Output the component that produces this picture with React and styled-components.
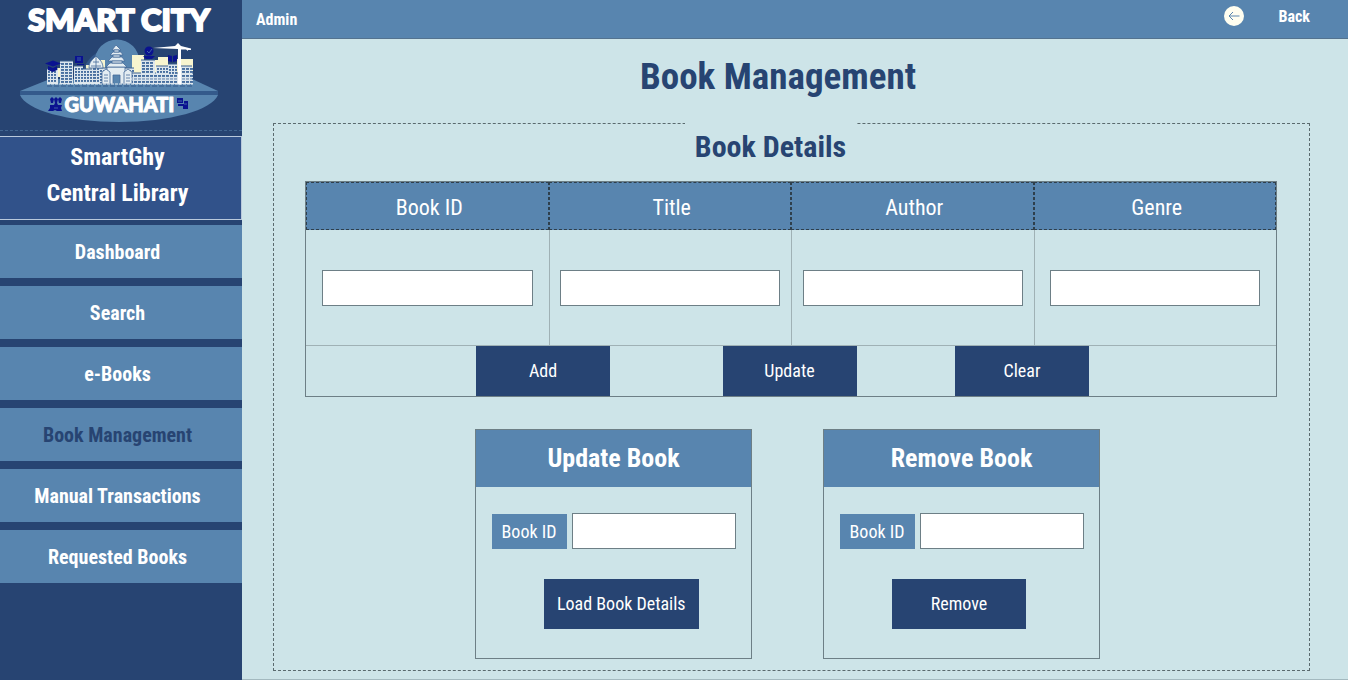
import React from "react";
import styled, { createGlobalStyle } from "styled-components";

const color = {
  navy: "#274472",
  brand: "#31528a",
  steel: "#5885af",
  ice: "#cde4e8",
  line: "#6d7f86",
  cream: "#f8f5cf",
  mark: "#0a1290",
};

const GlobalStyle = createGlobalStyle`
  * { box-sizing: border-box; }
  body {
    margin: 0;
    background: ${color.ice};
    font-family: "Agency FB", "Liberation Sans Narrow", "Roboto Condensed", "Liberation Sans", sans-serif;
  }
  button, input { font-family: inherit; }
`;

const Page = styled.div`
  display: flex;
  min-height: 100vh;
`;

const Sidebar = styled.aside`
  flex: 0 0 242px;
  background: ${color.navy};
`;

const LogoBox = styled.div`
  height: 131px;
  margin-bottom: 5px;
  border-bottom: 1px dashed ${color.steel}88;
`;

const LogoSvg = styled.svg`
  display: block;
  width: 100%;
`;

const Brand = styled.h2`
  margin: 0 0 5px;
  padding: 2px 6px 8px 0;
  border: 1px solid #b9c9dc;
  border-left: 0;
  background: ${color.brand};
  color: #fff;
  font-size: 24px;
  line-height: 36px;
  text-align: center;
`;

const Nav = styled.nav`
  display: flex;
  flex-direction: column;
  gap: 8px;
`;

const NavLink = styled.a`
  padding: 2px 7px 0 0;
  background: ${color.steel};
  color: ${(p) => (p.$active ? color.navy : "#fff")};
  font-size: 20px;
  font-weight: 700;
  line-height: 51px;
  text-align: center;
  text-decoration: none;
`;

const Main = styled.div`
  flex: 1;
  display: flex;
  flex-direction: column;
  min-width: 0;
`;

const TopBar = styled.header`
  display: flex;
  align-items: center;
  justify-content: space-between;
  height: 39px;
  padding: 0 38px 0 14px;
  border-bottom: 1px solid #54738f;
  background: ${color.steel};
  color: #fff;
  font-size: 16px;
  font-weight: 700;
`;

const BackLink = styled.a`
  display: flex;
  align-items: center;
  gap: 34px;
  padding-bottom: 6px;
  color: inherit;
  text-decoration: none;
`;

const Content = styled.main`
  flex: 1;
  display: flex;
  flex-direction: column;
  padding: 14px 38px 8px 31px;
  border-bottom: 1px solid #a3b9bf;
`;

const PageTitle = styled.h1`
  margin: 0 27px 22px 0;
  color: ${color.navy};
  font-size: 37px;
  line-height: 48px;
  text-align: center;
`;

const DetailsPanel = styled.section`
  flex: 1;
  padding: 0 32px 10px 31px;
  border: 1px dashed #5a6a6e;
`;

const PanelHeader = styled.div`
  display: flex;
  justify-content: center;
  margin: -1px 41px 10px 0;
`;

const PanelTitle = styled.h2`
  margin: 0;
  padding: 0 10px;
  background: ${color.ice};
  color: ${color.navy};
  font-size: 30px;
  line-height: 48px;
`;

const BookTable = styled.table`
  width: 100%;
  table-layout: fixed;
  border: 1px solid ${color.line};
  border-spacing: 0;
`;

const HeadCell = styled.th`
  height: 48px;
  padding: 4px 0 0 4px;
  border: 1px dashed #2e3f4c;
  background: ${color.steel};
  color: #fff;
  font-size: 22px;
  font-weight: 400;
  line-height: 30px;
`;

const FieldCell = styled.td`
  height: 116px;
  padding: 0;
  border-bottom: 1px solid #9fb1b5;
  text-align: center;
  & + & { border-left: 1px solid #9fb1b5; }
`;

const TextInput = styled.input`
  width: ${(p) => p.$width};
  height: 36px;
  padding: 0 8px;
  border: 1px solid ${color.line};
  background: #fff;
  font-size: 20px;
`;

const ActionCell = styled.td`
  padding: 0;
`;

const Actions = styled.div`
  display: grid;
  grid-template-columns: 171fr 134px 113fr 134px 99fr 134px 188fr;
  & > :nth-child(1) { grid-column: 2; }
  & > :nth-child(2) { grid-column: 4; }
  & > :nth-child(3) { grid-column: 6; }
`;

const Button = styled.button`
  min-width: 134px;
  height: 50px;
  padding: 0 13px 2px;
  border: 0;
  background: ${color.navy};
  color: #fff;
  font-size: 18px;
`;

const Cards = styled.div`
  display: flex;
  justify-content: center;
  gap: 71px;
  margin: 32px 7px 0 0;
`;

const Card = styled.form`
  width: 277px;
  height: 230px;
  border: 1px solid ${color.line};
`;

const CardTitle = styled.h3`
  margin: 0 0 26px;
  background: ${color.steel};
  color: #fff;
  font-size: 26px;
  line-height: 57px;
  text-align: center;
`;

const FieldRow = styled.div`
  display: flex;
  justify-content: center;
  align-items: center;
  gap: 5px;
  margin-bottom: 30px;
`;

const FieldLabel = styled.label`
  width: 75px;
  background: ${color.steel};
  color: #fff;
  font-size: 18px;
  line-height: 35px;
  text-align: center;
`;

const CardAction = styled.div`
  display: flex;
  padding-left: 68px;
`;

const navItems = ["Dashboard", "Search", "e-Books", "Book Management", "Manual Transactions", "Requested Books"];

const columns = [
  { name: "Book ID", width: "87%" },
  { name: "Title", width: "91%" },
  { name: "Author", width: "91%" },
  { name: "Genre", width: "87%" },
];

/* x, y, width, height of each building, with the pitch of its windows */
const buildings = [
  [47, 69, 11, 15, 3], [60, 61, 13, 23, 4], [74, 66, 9, 18, 3], [83, 69, 9, 15, 3],
  [92, 66, 8, 18, 4], [99, 68, 9, 16, 3], [125, 68, 9, 16, 3], [129, 73, 64, 11, 4],
  [141, 60, 14, 14, 4], [156, 66, 12, 8, 3], [168, 64, 9, 11, 3], [181, 66, 11, 9, 4],
];

const Building = ({ x, y, w, h, pitch }) => {
  const windows = [];
  for (let wy = y + 2; wy < y + h - 1; wy += 3)
    for (let wx = x + 1; wx < x + w - 1; wx += pitch)
      windows.push(<rect key={`${wx}-${wy}`} x={wx} y={wy} width={pitch - 1} height="1.9" />);
  return (
    <g>
      <rect x={x} y={y} width={w} height={h} fill="#dce6ed" />
      <g fill="#486f9f">{windows}</g>
      <path d={`M${x} ${y}h${w}`} stroke="#3d608f" strokeWidth="1" />
    </g>
  );
};

const logoType = {
  textAnchor: "middle",
  fill: "#fff",
  stroke: "#fff",
  strokeLinejoin: "round",
  fontFamily: '"Lato Black", Lato, sans-serif',
  fontWeight: 900,
};

const Logo = () => (
  <LogoSvg viewBox="0 0 242 130" role="img" aria-label="Smart City Guwahati">
    <text x="119" y="31" strokeWidth="2" fontSize="31" {...logoType}>SMART CITY</text>
    <path d="M82 80c0-13 7-24 17-28l-3 28z" fill="#34588a" />
    <circle cx="117" cy="62" r="22.5" fill={color.steel} />
    <path d="M20 91 50 79h142l26 12z" fill={color.steel} />
    <path d="M20 91h198v4H20z" fill="#345a8b" />
    <path d="M20 95h198c-6 15-48 27-99 27S26 110 20 95z" fill={color.steel} />
    <path d="M132 55h12v5h14v-3h10v18h-36zM177 59h16v17h-16zM52 68h9v9h-9zM97 60h8v10h-8zM86 65h7v6h-7z" fill={color.cream} />
    {buildings.map(([x, y, w, h, pitch]) => <Building key={x} {...{ x, y, w, h, pitch }} />)}
    <g fill="#e4edf2" stroke="#456b9b" strokeWidth=".8">
      <path d="M89 68c0-6 3-8 7-12 4 4 7 6 7 12zM91 66h10M93 62h6M96 56v12" />
      <path d="M107 84V67h18v17h-5v-9h-7v9z" />
      <path d="M106 67l4-4h13l4 4zM108 61l4-4h10l3 4zM110 55l3-3h8l2 3zM112 50l4-5 5 5z" />
      <path d="M112 61h10v2h-10zM113 55h7v2h-7zM114 50h5v2h-5z" />
      <path d="M102 72l4-3 4 3v12h-8zM104 75h4M104 78h4M104 81h4M124 72l4-3 4 3v12h-8zM126 75h4M126 78h4M126 81h4" />
    </g>
    <path d="M47 84h146M130 79h62" stroke="#e8eff3" strokeWidth="1" strokeDasharray="3 1" />
    <path d="M47 86h146" stroke="#345a8b" strokeWidth="1" strokeDasharray="5 2" />
    <path d="M153 48l22-2 3-3 3 3 10 2.5v1.5h-3v1l-2-1.5h-5v35h-3V49z" fill="#fff" />
    <g fill={color.mark}>
      <path d="M45 63.5l8-3 8 3-8 3zM48 66v4l5 2 4-2v-4l-4 2z" />
      <path d="M75 56h8v7h-8zM77 64h7v1h-7z" />
      <circle cx="149" cy="51" r="4.5" />
      <path d="M143 56h12l-3 3h-6z" />
      <path d="M168 55l4 1v6l-4-1zM173 56l4-1v6l-4 1z" />
      <path d="M50 99l2-2 2 2-1 4h-2zM54 99l2-2 2 2-1 4h-2zM58 99l2-2 2 2-1 4h-2zM50 105h4l1-2h2l1 2h4l-1 3 1 3h-5l-2-1-2 1h-5l2-3z" />
      <path d="M177 98h6v5h-6zM184 101h4v8h-5v-3h-5v-2h6z" />
    </g>
    <path d="M147 51l2 2 3-4M77 58h4M77 60h4M184 104h3M178 101h4M54 108h4" stroke={color.steel} strokeWidth=".7" fill="none" />
    <text x="119.5" y="112" strokeWidth="1" fontSize="20" {...logoType}>GUWAHATI</text>
  </LogoSvg>
);

const BackIcon = () => (
  <svg width="20" height="20" viewBox="0 0 20 20" aria-hidden="true">
    <circle cx="10" cy="10" r="10" fill="#fffef0" />
    <path d="M15.5 10H5M9 6l-4 4 4 4" fill="none" stroke={color.steel} strokeWidth="1" />
  </svg>
);

const BookCard = ({ title, id, action }) => (
  <Card onSubmit={(e) => e.preventDefault()}>
    <CardTitle>{title}</CardTitle>
    <FieldRow>
      <FieldLabel htmlFor={id}>Book ID</FieldLabel>
      <TextInput id={id} type="text" $width="164px" />
    </FieldRow>
    <CardAction><Button type="submit">{action}</Button></CardAction>
  </Card>
);

export default function App() {
  return (
    <Page>
      <GlobalStyle />
      <Sidebar>
        <LogoBox><Logo /></LogoBox>
        <Brand>SmartGhy<br />Central Library</Brand>
        <Nav>
          {navItems.map((item) => (
            <NavLink key={item} href="#" $active={item === "Book Management"}>{item}</NavLink>
          ))}
        </Nav>
      </Sidebar>
      <Main>
        <TopBar>
          <span>Admin</span>
          <BackLink href="#"><BackIcon />Back</BackLink>
        </TopBar>
        <Content>
          <PageTitle>Book Management</PageTitle>
          <DetailsPanel>
            <PanelHeader><PanelTitle>Book Details</PanelTitle></PanelHeader>
            <BookTable>
              <thead>
                <tr>{columns.map((c) => <HeadCell key={c.name} scope="col">{c.name}</HeadCell>)}</tr>
              </thead>
              <tbody>
                <tr>
                  {columns.map((c) => (
                    <FieldCell key={c.name}><TextInput type="text" aria-label={c.name} $width={c.width} /></FieldCell>
                  ))}
                </tr>
                <tr>
                  <ActionCell colSpan={4}>
                    <Actions>
                      <Button type="button">Add</Button>
                      <Button type="button">Update</Button>
                      <Button type="button">Clear</Button>
                    </Actions>
                  </ActionCell>
                </tr>
              </tbody>
            </BookTable>
            <Cards>
              <BookCard title="Update Book" id="update-id" action="Load Book Details" />
              <BookCard title="Remove Book" id="remove-id" action="Remove" />
            </Cards>
          </DetailsPanel>
        </Content>
      </Main>
    </Page>
  );
}
